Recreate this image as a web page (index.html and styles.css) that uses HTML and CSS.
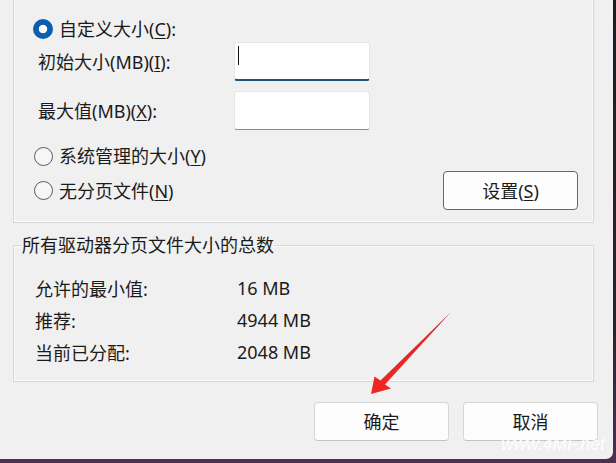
FILE: index.html
```html
<!DOCTYPE html>
<html lang="zh-CN">
<head>
<meta charset="utf-8">
<title>虚拟内存</title>
<link rel="stylesheet" href="styles.css">
</head>
<body>
<div class="window">
  <div class="group1">
    <div class="radio-row first">
      <span class="radio checked"></span>
      <span class="label">自定义大小(<u>C</u>):</span>
    </div>
    <div class="field-row">
      <span class="field-label">初始大小(MB)(<u>I</u>):</span>
      <span class="input focused"><span class="caret"></span></span>
    </div>
    <div class="field-row second">
      <span class="field-label">最大值(MB)(<u>X</u>):</span>
      <span class="input"></span>
    </div>
    <div class="radio-row sys">
      <span class="radio"></span>
      <span class="label">系统管理的大小(<u>Y</u>)</span>
    </div>
    <div class="radio-row last">
      <span class="radio"></span>
      <span class="label">无分页文件(<u>N</u>)</span>
      <span class="spacer"></span>
      <button class="btn default">设置(<u>S</u>)</button>
    </div>
  </div>

  <fieldset class="group2">
    <legend>所有驱动器分页文件大小的总数</legend>
    <div class="info-row"><span class="info-label">允许的最小值:</span><span class="info-value">16 MB</span></div>
    <div class="info-row"><span class="info-label">推荐:</span><span class="info-value">4944 MB</span></div>
    <div class="info-row"><span class="info-label">当前已分配:</span><span class="info-value">2048 MB</span></div>
  </fieldset>

  <div class="buttons">
    <button class="btn">确定</button>
    <button class="btn">取消</button>
  </div>

  <svg class="arrow" width="616" height="463" viewBox="0 0 616 463" aria-hidden="true">
    <defs>
      <linearGradient id="ag" x1="451" y1="312" x2="372" y2="393" gradientUnits="userSpaceOnUse">
        <stop offset="0" stop-color="#a02a40"/>
        <stop offset="0.35" stop-color="#e0282a"/>
        <stop offset="1" stop-color="#f02620"/>
      </linearGradient>
    </defs>
    <polygon points="451,312 385,384.5 391,388.5 371,394 374.5,376.5 380.5,380.5" fill="url(#ag)"/>
  </svg>
  <div class="watermark">www.4MF.net</div>
</div>
</body>
</html>
```

FILE: styles.css
```css
html, body {
  margin: 0;
  padding: 0;
}
body {
  width: 616px;
  height: 463px;
  background: linear-gradient(to bottom, #1c1c1e 0%, #2a2230 70%, #4a3150 100%);
  overflow: hidden;
  font-family: "Noto Sans", "Noto Sans CJK SC", sans-serif;
  font-size: 18px;
  color: #1b1b1b;
}
.window {
  position: relative;
  width: 613px;
  height: 459px;
  background: #f0f0f0;
  border-bottom-right-radius: 7px;
  overflow: hidden;
}
u {
  text-decoration: underline;
  text-underline-offset: 2px;
  text-decoration-thickness: 1px;
}

/* first group box (top cut off) */
.group1 {
  box-sizing: border-box;
  margin-left: 13px;
  width: 581px;
  height: 223px;
  border: 1px solid #d7d7d7;
  border-top: none;
  box-shadow: inset 1px 0 #fbfbfb, inset -1px 0 #fbfbfb, inset 0 -1px #fbfbfb;
  padding: 17px 15px 0 20px;
  display: flex;
  flex-direction: column;
}
.radio-row {
  display: flex;
  align-items: center;
  height: 24px;
}
.radio-row.sys { margin-top: 14px; }
.radio-row.last {
  margin-top: 3px;
  height: 39px;
}
.radio {
  box-sizing: border-box;
  width: 19px;
  height: 19px;
  border-radius: 50%;
  border: 1px solid #5c5c5c;
  background: #f6f6f6;
  margin-right: 6px;
  flex: none;
}
.radio.checked {
  width: 20px;
  height: 20px;
  margin-left: -1px;
  margin-right: 6px;
  border: none;
  background: radial-gradient(circle, #ffffff 0 3.8px, #0b5fae 4.6px);
}
.label {
  line-height: 22px;
  white-space: nowrap;
}
.spacer { flex: 1; }

.field-row {
  display: flex;
  align-items: center;
  height: 39px;
  margin-top: 1px;
  padding-left: 4px;
}
.field-row.second { margin-top: 10px; }
.field-label {
  width: 196px;
  white-space: nowrap;
  line-height: 22px;
}
.input {
  box-sizing: border-box;
  width: 136px;
  height: 39px;
  background: #ffffff;
  border: 1px solid #e6e6e6;
  border-bottom: 1px solid #8a8a8a;
  border-radius: 3px;
  display: flex;
  align-items: flex-start;
}
.input.focused {
  border-bottom: 2px solid #245470;
  box-shadow: 0 1px 0 #e4eef6;
}
.caret {
  display: block;
  width: 1px;
  height: 19px;
  background: #111;
  margin: 3px 0 0 3px;
}

.btn {
  box-sizing: border-box;
  width: 135px;
  height: 39px;
  background: #fdfdfd;
  border: 1px solid #d6d6d6;
  border-bottom-color: #c4c4c4;
  border-radius: 4px;
  font-family: "Noto Sans", "Noto Sans CJK SC", sans-serif;
  font-size: 18px;
  color: #1b1b1b;
  padding: 0;
  line-height: 22px;
}
.btn.default {
  border: 1px solid #46708f;
}

/* second group box */
.group2 {
  box-sizing: border-box;
  margin: 11px 0 0 13px;
  width: 581px;
  border: 1px solid #d7d7d7;
  box-shadow: inset 1px 1px #fbfbfb, inset -1px -1px #fbfbfb;
  padding: 16px 15px 13px 8px;
  min-width: 0;
}
.group2 legend {
  padding: 0;
  line-height: 22px;
  font-size: 18px;
}
.info-row {
  display: flex;
  align-items: center;
  height: 32px;
  margin-left: 13px;
}
.info-label {
  width: 202px;
  white-space: nowrap;
}
.info-value { white-space: nowrap; }

.buttons {
  display: flex;
  justify-content: flex-end;
  gap: 14px;
  margin-top: 20px;
  padding-right: 15px;
}

/* overlays */
.arrow {
  position: absolute;
  left: 0;
  top: 0;
  pointer-events: none;
}
.watermark {
  position: absolute;
  left: 501px;
  top: 434px;
  font-family: "Liberation Sans", sans-serif;
  font-style: italic;
  font-size: 17.5px;
  line-height: 20px;
  color: rgba(255, 255, 255, 0.95);
  white-space: nowrap;
}
```
